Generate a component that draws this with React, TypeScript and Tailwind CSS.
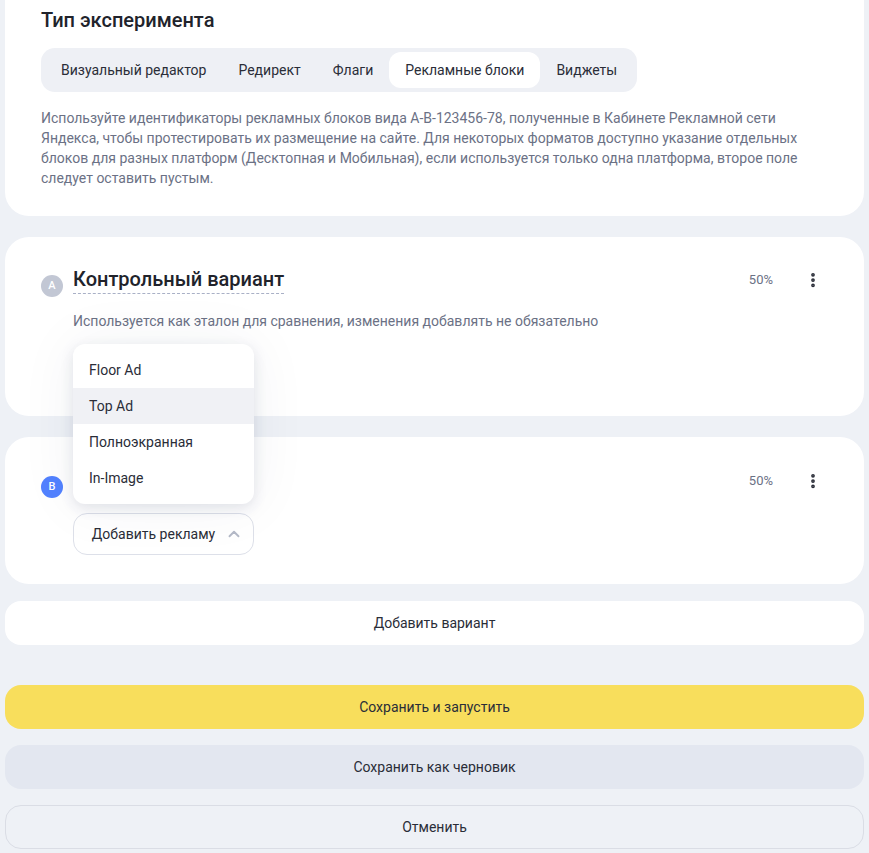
import { MoreVertical, ChevronUp } from 'lucide-react';

const tabs = ['Визуальный редактор', 'Редирект', 'Флаги', 'Рекламные блоки', 'Виджеты'];
const adFormats = ['Floor Ad', 'Top Ad', 'Полноэкранная', 'In-Image'];

const VariantHeader = ({
  letter,
  badgeClass,
  title,
}: {
  letter: string;
  badgeClass: string;
  title?: string;
}) => (
  <div className="flex items-center h-[30px]">
    <div
      className={`w-[22px] h-[22px] rounded-full flex items-center justify-center text-[11px] font-medium text-white mt-[12px] ${badgeClass}`}
    >
      {letter}
    </div>
    {title && (
      <div className="ml-[10px] text-[20px] leading-[26px] font-medium text-[#21232b] border-b border-dashed border-[#a9b0c6] pb-[1px]">
        {title}
      </div>
    )}
    <div className="ml-auto text-[13px] text-[#6b7185]">50%</div>
    <button className="ml-[31px] mr-[42px] text-[#2a2d38]">
      <MoreVertical size={18} strokeWidth={3} />
    </button>
  </div>
);

export default function App() {
  return (
    <div className="min-h-[853px] bg-[#eef1f6] px-[5px] pb-[4px] font-['Roboto',sans-serif] text-[#21232b]">
      {/* Experiment type */}
      <section className="-mt-[24px] bg-white rounded-[24px] pt-[30px] pb-[28px] px-[36px]">
        <h2 className="text-[20px] leading-[28px] font-medium">Тип эксперимента</h2>
        <div className="mt-[14px] inline-flex items-center bg-[#eef0f5] rounded-[14px] p-[4px] h-[44px]">
          {tabs.map((tab) => (
            <div
              key={tab}
              className={`h-[36px] px-[16px] flex items-center rounded-[12px] text-[14px] text-[#2a2d38] ${
                tab === 'Рекламные блоки' ? 'bg-white' : ''
              }`}
            >
              {tab}
            </div>
          ))}
        </div>
        <p className="mt-[16px] text-[14px] leading-[20px] text-[#6b7185] max-w-[760px]">
          Используйте идентификаторы рекламных блоков вида A-B-123456-78, полученные в Кабинете Рекламной сети
          Яндекса, чтобы протестировать их размещение на сайте. Для некоторых форматов доступно указание отдельных
          блоков для разных платформ (Десктопная и Мобильная), если используется только одна платформа, второе поле
          следует оставить пустым.
        </p>
      </section>

      {/* Control variant */}
      <section className="mt-[21px] bg-white rounded-[24px] h-[179px] pt-[28px] pl-[36px]">
        <VariantHeader letter="A" badgeClass="bg-[#c2c7d4]" title="Контрольный вариант" />
        <p className="mt-[16px] ml-[32px] text-[14px] leading-[20px] text-[#6b7185]">
          Используется как эталон для сравнения, изменения добавлять не обязательно
        </p>
      </section>

      {/* Variant B */}
      <section className="mt-[21px] bg-white rounded-[24px] h-[147px] pt-[29px] pl-[36px]">
        <VariantHeader letter="B" badgeClass="bg-[#5282ff]" />
        <div className="relative ml-[32px] mt-[17px] w-[181px]">
          <button className="w-[181px] h-[42px] rounded-[14px] border border-[#dde0e9] flex items-center justify-center gap-[10px] pl-[8px] text-[14px] text-[#2a2d38]">
            Добавить рекламу
            <ChevronUp size={18} strokeWidth={2.5} className="text-[#b4b9c7]" />
          </button>
          <ul className="absolute left-0 bottom-[51px] w-[181px] bg-white rounded-[12px] py-[8px] shadow-[0_4px_14px_rgba(40,50,90,0.12),0_0_60px_rgba(40,50,90,0.06)]">
            {adFormats.map((item) => (
              <li
                key={item}
                className={`h-[36px] px-[16px] flex items-center text-[14px] text-[#2a2d38] ${
                  item === 'Top Ad' ? 'bg-[#f0f1f5]' : ''
                }`}
              >
                {item}
              </li>
            ))}
          </ul>
        </div>
      </section>

      <button className="mt-[17px] w-full h-[44px] bg-white rounded-[16px] text-[14px] text-[#2a2d38]">
        Добавить вариант
      </button>

      <div className="mt-[40px] flex flex-col gap-[16px]">
        <button className="w-full h-[44px] bg-[#f8de5c] rounded-[16px] text-[14px] text-[#2a2d38]">
          Сохранить и запустить
        </button>
        <button className="w-full h-[44px] bg-[#e3e7f0] rounded-[16px] text-[14px] text-[#2a2d38]">
          Сохранить как черновик
        </button>
        <button className="w-full h-[44px] border border-[#dadde5] rounded-[16px] text-[14px] text-[#2a2d38]">
          Отменить
        </button>
      </div>
    </div>
  );
}
